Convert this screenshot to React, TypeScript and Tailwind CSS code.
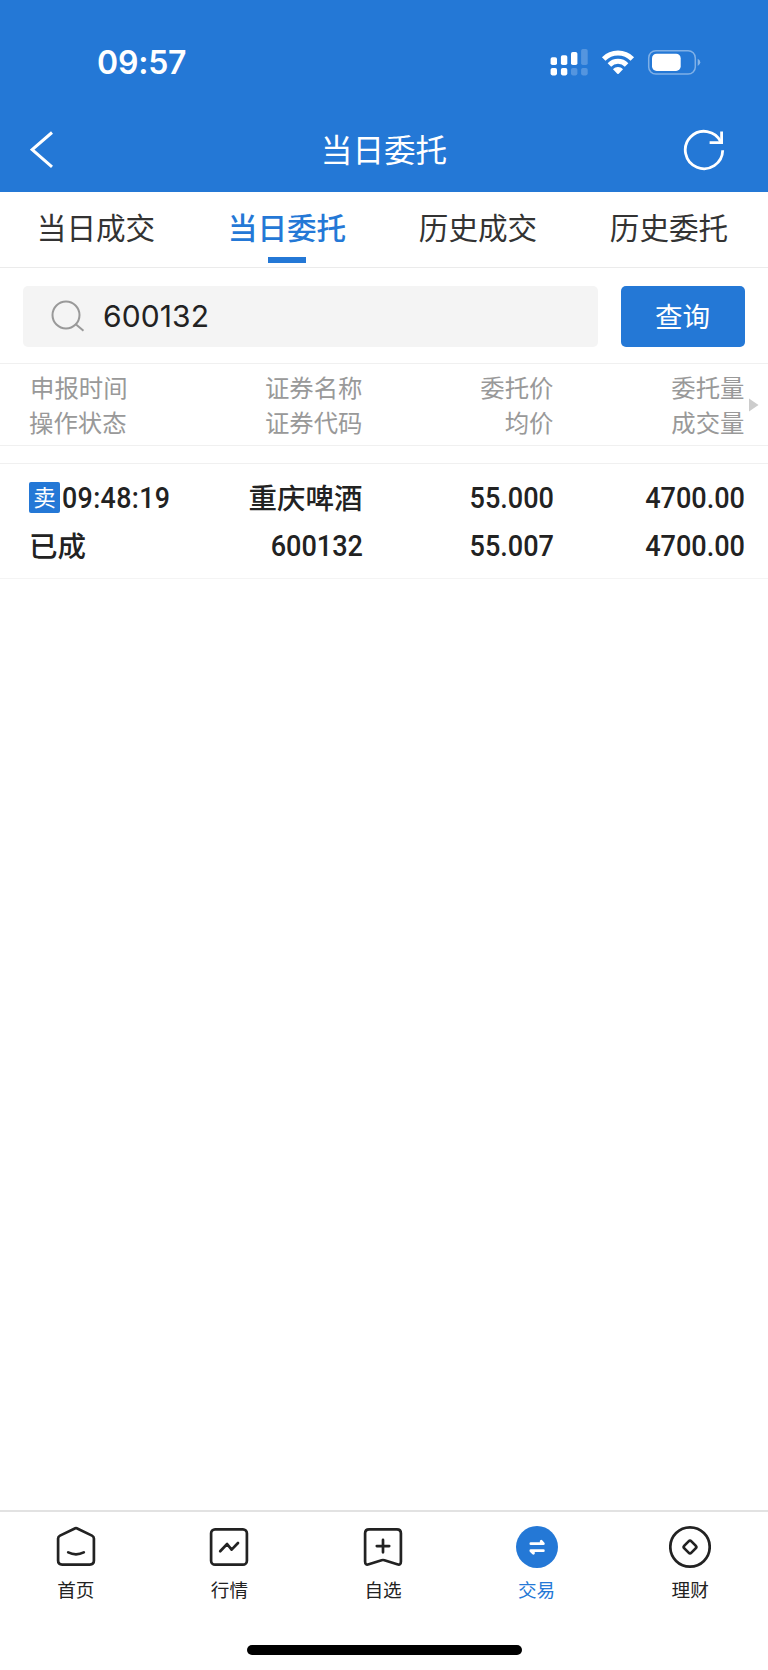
import React, { useState } from "react";

const tabs = ["当日成交", "当日委托", "历史成交", "历史委托"];

const columns = [
  { top: "证券名称", bottom: "证券代码" },
  { top: "委托价", bottom: "均价" },
  { top: "委托量", bottom: "成交量" },
];

const orders = [
  {
    side: "卖",
    time: "09:48:19",
    status: "已成",
    name: "重庆啤酒",
    code: "600132",
    price: "55.000",
    avgPrice: "55.007",
    amount: "4700.00",
    dealt: "4700.00",
  },
];

const StatusBar = () => (
  <div className="h-[108px] pt-[44px] pl-[97px] pr-[67px] flex justify-between">
    <p className="font-['Inter'] font-semibold text-[32px] leading-[38px] tracking-[-0.2px]">
      09:57
    </p>
    <svg className="w-[151px] h-[27px] mt-[5px]" viewBox="550 49 151 27" fill="white">
      {/* Signal */}
      <rect x="550.6" y="57.3" width="6.4" height="7.8" rx="1.8" />
      <rect x="560.9" y="55.2" width="6.4" height="9.9" rx="1.8" />
      <rect x="571" y="52" width="6.4" height="13.1" rx="1.8" />
      <rect x="581.1" y="49" width="6.6" height="16.1" rx="1.8" opacity="0.22" />
      <rect x="550.6" y="68" width="6.4" height="7.4" rx="1.8" />
      <rect x="560.9" y="68" width="6.4" height="7.4" rx="1.8" />
      <rect x="571" y="68" width="6.4" height="7.4" rx="1.8" opacity="0.22" />
      <rect x="581.1" y="68" width="6.6" height="7.4" rx="1.8" opacity="0.22" />
      {/* Wifi */}
      <g fill="none" stroke="white" strokeWidth="5">
        <path d="M603.7 58.9a20.3 20.3 0 0 1 28.6 0" />
        <path d="M609.4 64.9a12.2 12.2 0 0 1 17.2 0" />
      </g>
      <path d="M613 69.2c2.8-2.9 7.2-2.9 10 0l-4.3 4.5q-.7.6-1.4 0z" />
      {/* Battery */}
      <rect
        x="648.7"
        y="50.7"
        width="46.6"
        height="23.4"
        rx="7.2"
        fill="none"
        stroke="white"
        strokeWidth="1.5"
        opacity="0.42"
      />
      <rect x="652" y="53.7" width="28.7" height="17.2" rx="4.6" />
      <path d="M697.7 58.7q2.6 1.3 2.6 3.6t-2.6 3.6z" opacity="0.45" />
    </svg>
  </div>
);

const navItems = [
  {
    label: "首页",
    icon: (
      <>
        <path d="M20.3 3.2 5 10.6Q3.1 11.5 3.1 13.6V35.6Q3.1 39.7 7.2 39.7H34.8Q38.9 39.7 38.9 35.6V13.6Q38.9 11.5 37 10.6L21.7 3.2Q21 2.9 20.3 3.2Z" />
        <path d="M13.2 27.4Q21 31.2 28.8 27.4" />
      </>
    ),
  },
  {
    label: "行情",
    icon: (
      <>
        <rect x="3.1" y="4.3" width="35.8" height="35.4" rx="4" />
        <path d="m12.2 26.2 6.9-7.2 4.5 5.6 6.4-6.6" />
      </>
    ),
  },
  {
    label: "自选",
    icon: (
      <>
        <path d="M7.1 4.3H34.9Q38.9 4.3 38.9 8.3V36.6Q38.9 40.6 35.2 39.2L22.4 35.2Q21 34.8 19.6 35.2L6.8 39.2Q3.1 40.6 3.1 36.6V8.3Q3.1 4.3 7.1 4.3Z" />
        <path d="M14.8 21.1H27.2M21 14.9V27.3" />
      </>
    ),
  },
  {
    label: "交易",
    icon: (
      <>
        <circle cx="21" cy="22" r="21" fill="#2478d6" stroke="none" />
        <g stroke="white" fill="white" strokeWidth="2.7">
          <path d="M14.8 18.7H27.4L25.2 16.2V18.7" />
          <path d="M27.4 25.7H14.8L17.4 28.4V25.7" />
        </g>
      </>
    ),
  },
  {
    label: "理财",
    icon: (
      <>
        <circle cx="21" cy="22" r="19.7" />
        <rect x="16" y="17" width="10" height="10" rx="2" transform="rotate(45 21 22)" />
      </>
    ),
  },
];

// DIN-like narrow figures
const Digits = ({ children, left }: { children: string; left?: boolean }) => (
  <span
    className={
      left
        ? "block origin-left scale-x-[0.93] font-['Roboto'] font-medium text-[28.8px] tracking-[0.4px]"
        : "block origin-right scale-x-[0.94] font-['Roboto'] font-medium text-[28.8px]"
    }
  >
    {children}
  </span>
);

const App: React.FunctionComponent = () => {
  const [activeTab, setActiveTab] = useState("当日委托");
  const [activeNav, setActiveNav] = useState("交易");
  const [keyword, setKeyword] = useState("600132");

  return (
    <div className="w-[768px] h-[1670px] bg-white flex flex-col overflow-hidden text-[#222222] font-['Noto_Sans_CJK_SC',sans-serif]">
      <header className="h-[192px] bg-[#2478d6] text-white shrink-0">
        <StatusBar />
        <div className="h-[84px] pl-[30px] pr-[42px] flex items-center justify-between">
          <button className="w-[56px]">
            <svg className="w-6 h-10" viewBox="30 130 24 40" fill="none" stroke="white" strokeWidth="3">
              <path d="M52 132.5 32.2 149.7 52 166.9" />
            </svg>
          </button>
          <h1 className="pb-[4px] text-[31.6px] leading-[44px]">当日委托</h1>
          <button>
            <svg className="w-[44px] h-[44px]" viewBox="682 128 44 44" fill="none" stroke="white" strokeWidth="2.8">
              <path d="M722.7 150.3A18.7 18.7 0 1 1 721 142.2" />
              <path d="M721.6 131.4V142.6H709.6" />
            </svg>
          </button>
        </div>
      </header>

      <nav className="h-[76px] flex border-b border-[#ebebeb] shrink-0">
        {tabs.map((tab) => (
          <button
            key={tab}
            onClick={() => setActiveTab(tab)}
            className="w-[191px] pt-[13px] flex flex-col items-center text-[#333333]"
          >
            <span
              className={
                activeTab === tab
                  ? "ml-px text-[29.6px] leading-[44px] font-medium text-[#2478d6]"
                  : "ml-px text-[29.6px] leading-[44px]"
              }
            >
              {tab}
            </span>
            {activeTab === tab && <span className="mt-[7.5px] w-[38px] h-[6px] bg-[#2478d6]" />}
          </button>
        ))}
      </nav>

      <section className="h-[95px] pt-[17.5px] px-[23px] flex gap-[23px] shrink-0">
        <div className="w-[575px] h-[61px] bg-[#f4f4f4] rounded-[5px] flex items-center pl-[28px]">
          <svg className="w-[34px] h-[34px]" viewBox="51 299 34 34" fill="none" stroke="#999999" strokeWidth="2">
            <circle cx="66" cy="315" r="13.5" />
            <path d="m75.5 324 8 6.7" />
          </svg>
          <input
            value={keyword}
            onChange={(e) => setKeyword(e.target.value)}
            className="w-[400px] ml-[18px] bg-transparent outline-none font-['Inter'] text-[30px] tracking-[0.1px]"
          />
        </div>
        <button className="w-[124px] h-[61px] pb-px pr-px bg-[#2478d6] rounded-[5px] text-white text-[27.6px]">
          查询
        </button>
      </section>

      <section className="h-[83px] pt-[4px] pl-[30px] pr-[8px] border-y border-[#f0f0f0] flex items-center text-[24.4px] leading-[35px] text-[#999999] shrink-0">
        <div className="w-[141.5px] h-[76px]">
          <p>申报时间</p>
          <p className="-ml-px">操作状态</p>
        </div>
        {columns.map((col) => (
          <div key={col.top} className="w-[191px] h-[76px] text-right">
            <p>{col.top}</p>
            <p>{col.bottom}</p>
          </div>
        ))}
        <svg className="w-[10px] h-[14px] ml-[4.5px] mb-[4px]" viewBox="0 0 10 14" fill="#cccccc">
          <path d="M0 .5 9.5 7 0 13.5z" />
        </svg>
      </section>

      <section className="mt-[17px] border-t border-[#f0f0f0] grow">
        {orders.map((item) => (
          <div
            key={item.time}
            className="h-[115px] pt-[9px] pl-[29px] flex border-b border-[#f4f4f4] text-[28.5px] leading-[48px] font-medium"
          >
            <div className="w-[142.5px] whitespace-nowrap">
              <div className="flex items-center h-[48px]">
                <span className="w-[31px] h-[31px] mr-[2px] rounded-[2px] bg-[#2478d6] text-white text-[22.5px] leading-[28px] font-normal text-center shrink-0">
                  {item.side}
                </span>
                <div className="pt-px">
                  <Digits left>{item.time}</Digits>
                </div>
              </div>
              <p>{item.status}</p>
            </div>
            <div className="w-[191px] text-right">
              <p>{item.name}</p>
              <div className="pt-px">
                <Digits>{item.code}</Digits>
              </div>
            </div>
            <div className="w-[191px] pt-px text-right">
              <Digits>{item.price}</Digits>
              <Digits>{item.avgPrice}</Digits>
            </div>
            <div className="w-[191px] pt-px text-right">
              <Digits>{item.amount}</Digits>
              <Digits>{item.dealt}</Digits>
            </div>
          </div>
        ))}
      </section>

      <footer className="h-[160px] border-t-2 border-[#e2e2e2] shrink-0">
        <div className="flex w-[768px] -ml-px pt-[13px]">
          {navItems.map((item) => (
            <button
              key={item.label}
              onClick={() => setActiveNav(item.label)}
              className={
                activeNav === item.label
                  ? "flex-1 flex flex-col items-center text-[#2478d6]"
                  : "flex-1 flex flex-col items-center text-[#222222]"
              }
            >
              <svg
                className="w-[42px] h-[44px]"
                viewBox="0 0 42 44"
                fill="none"
                stroke="#222222"
                strokeWidth="2.7"
                strokeLinecap="round"
                strokeLinejoin="round"
              >
                {item.icon}
              </svg>
              <span className="mt-[7px] text-[18.6px] leading-[26px]">{item.label}</span>
            </button>
          ))}
        </div>
        <div className="w-[275px] h-[10px] mx-auto mt-[42.5px] rounded-full bg-black" />
      </footer>
    </div>
  );
};

export default App;
